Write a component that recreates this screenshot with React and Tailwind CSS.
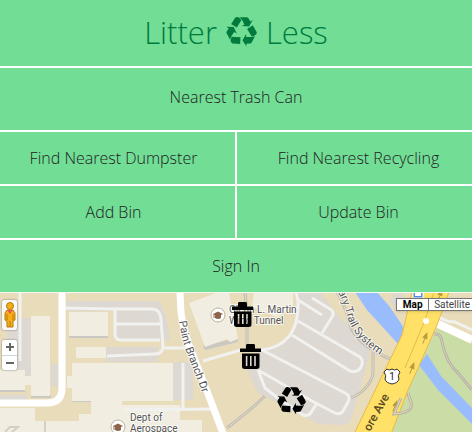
function RecycleIcon(props) {
  return (
    <svg viewBox="0 0 1792 1792" fill="currentColor" aria-hidden="true" {...props}>
      <path d="M836 1169l-15 368-2 22-420-29q-36-3-67-31.500t-47-65.500q-11-27-14.500-55t4-65 12-55 21.500-64 19-53q78 12 509 28zm-387-586l180 379-147-92q-63 72-111.500 144.500t-72.500 125-39.500 94.500-18.500 63l-4 21-190-357q-17-26-18-56t6-47l8-18q35-63 114-188l-140-86zm1231 517l-188 359q-12 29-36.500 46.500t-43.500 20.500l-18 4q-71 7-219 12l8 164-230-367 211-362 7 173q170 16 283 5t170-33zm-785-924q-47 63-265 435l-317-187-19-12 225-356q20-31 60-45t80-10q24 2 48.500 12t42 21 41.500 33 36 34.500 36 39.500 32 35zm655 307l212 363q18 37 12.500 76t-27.500 74q-13 20-33 37t-38 28-48.500 22-47 16-51.500 14-46 12q-34-72-265-436l313-195zm-143-226l142-83-220 373-419-20 151-86q-34-89-75-166t-75.500-123.500-64.500-80-47-46.500l-17-13 405 1q31-3 58 10.500t39 28.500l11 15q39 61 112 190z" />
    </svg>
  );
}

function ActionButton({ children, className = "h-[52px]" }) {
  return (
    <button
      type="button"
      className={`w-full cursor-pointer bg-[#71dd95] text-center text-[16px] font-light text-[#222] ${className}`}
    >
      {children}
    </button>
  );
}

function TrashMarker({ x, y }) {
  return (
    <g transform={`translate(${x} ${y})`} fill="#000">
      <path d="M7 1.500Q7 0 8 0H15Q16 0 16 1.500V4.500H22V8H1V4.500H7z" />
      <path
        fillRule="evenodd"
        d="M3 9.500h17.500v13q0 2.500-3 2.500H6q-3 0-3-2.500zM6.800 12v10h1.600V12zM11 12v10h1.600V12zM15.200 12v10h1.600V12z"
      />
    </g>
  );
}

function SchoolPin({ x, y }) {
  return (
    <g transform={`translate(${x} ${y})`}>
      <circle r="7" fill="#fff" stroke="#b9b3a5" strokeWidth="1" />
      <path d="M-5-1 0-3.500 5-1 3 0v3q-3 2-6 0V0z" fill="#8d6449" />
      <path d="M-4-1v4" stroke="#8d6449" />
    </g>
  );
}

function RoadArrow({ x, y }) {
  return (
    <path
      transform={`translate(${x} ${y}) rotate(22)`}
      d="M0 6V-2M-2 0 0-5 2 0z"
      fill="#b79a3e"
      stroke="#b79a3e"
      strokeWidth="1"
    />
  );
}

function CampusMap() {
  const halo = {
    stroke: "#fff",
    strokeWidth: 2,
    strokeOpacity: 0.75,
    paintOrder: "stroke",
    strokeLinejoin: "round",
  };
  return (
    <svg
      viewBox="0 292 472 140"
      preserveAspectRatio="xMidYMin slice"
      className="block h-full w-full font-['Roboto',sans-serif]"
      role="img"
      aria-label="Campus map"
    >
      <defs>
        <path id="paint-branch" d="M179 321Q182 342 189 358L206 403" />
        <path id="trail" d="M338 292Q343 302 347 315Q354 343 392 361" />
      </defs>
      <rect y="292" width="472" height="140" fill="#e8dcbb" />

      <g fill="#ddd8d1">
        <path d="M7 318H31V376H7zM51 364H58V386H51zM66 301H157Q166 305 170 340H115V311H66zM106 347H158V362H106zM173 362H193V400H173zM0 395H27V400H0z" />
        <path d="M298 292H320L342 320 364 338Q370 345 369 356L352 416Q350 426 340 425L318 424 258 393Q248 375 245 360L262 350Q286 347 294 332 301 316 298 292z" />
      </g>

      <g fill="#cbc8c4">
        <path d="M69 335H108V338H69zM31 395H51V398H31zM0 389H25V392H0zM203 346 238 338 238 342 205 350zM72 400H120V402H72z" />
      </g>
      <g fill="#f1ede0">
        <path d="M31 316H50V396H31V385H25V390H0V370H25V376H31zM69 312H108V336H69zM76 347H106V358H76zM72 363H173V401H72V388H67V376H72zM0 408H35V421H79V414H91V401H122V405H180V420H202V432H0z" />
        <path d="M189 303 216 293H229L238 339 230 342 227 339 205 347z" />
        <path d="M254 292H293V308L277 317 252 307z" />
      </g>
      <path d="M45 421V432M5 432 10 427H18L12 432" fill="none" stroke="#d4cfc5" strokeWidth="2" />

      <path d="M435 292H472V335L437 320z" fill="#e8dcbb" />
      <path d="M395 292H403L398 312 390 301z" fill="#ddd8d1" />
      <path d="M437 328 472 344V432H385L412 380z" fill="#cadda7" />
      <path d="M355 292H377L390 307 404 328 399 345 367 310z" fill="#99bdfc" />
      <path d="M427 354 441 376 472 408V424L438 390 419 365z" fill="#99bdfc" />

      <g fill="none" stroke="#f1f1f0" strokeWidth="3" strokeLinejoin="round">
        <path d="M20 292V361M62 308 115 309H151Q160 308 161 320L163 346Q163 354 155 354L107 356M115 309V334Q115 340 121 340H160M116 324H161M163 348H186M183 363V408M125 410 215 409" />
        <path d="M203 361 241 350H262Q300 345 298 301L296 292M298 300 322 315M298 321 360 357Q364 361 361 367 358 373 350 371L292 335M262 350 345 393Q351 396 348 402L343 411Q340 416 333 412L312 401 258 370M258 370 265 388 278 398 303 415Q309 417 312 411L317 403M312 298 330 309Q335 312 332 317L322 333M430 308Q440 322 455 322L472 330" />
      </g>
      <g fill="none">
        <path d="M245 292 247 314V348M265 396Q252 409 227 428M373 350V374Q369 390 351 398M336 290Q345 305 350 325 357 345 390 359" stroke="#c1bcb1" strokeWidth="3" />
        <path d="M245 292 247 314V348M265 396Q252 409 227 428M373 350V374Q369 390 351 398M336 290Q345 305 350 325 357 345 390 359" stroke="#e3dcca" strokeWidth="1" />
      </g>
      <path d="M180 292 181 313Q184 335 194 358L207 391 224 436M62 292V388Q62 403 47 403H0" fill="none" stroke="#fff" strokeWidth="7" />
      <path d="M434 322 472 340" stroke="#fff" strokeWidth="8" />

      <path d="M412 292H449L437 325 419 366 408 390 391 434H354L382 376 402 335z" fill="#ffe168" stroke="#e9b84b" strokeWidth="1" />
      <path d="M434 292 425 320 405 368" fill="none" stroke="#e4bd47" strokeWidth="1" />
      <circle cx="426" cy="321" r="3" fill="#fff" />
      <RoadArrow x={425} y={338} />
      <RoadArrow x={412} y={368} />
      <RoadArrow x={395} y={406} />
      <RoadArrow x={440} y={295} />
      <path d="M401 398 394 414Q414 413 411 402L408 393" fill="none" stroke="#bbb19a" strokeWidth="3" />
      <path d="M401 398 394 414Q414 413 411 402L408 393" fill="none" stroke="#e3dcca" strokeWidth="1" />
      <path d="M434 334Q441 333 442 342 446 363 459 374L472 390" fill="none" stroke="#b5b2a5" strokeWidth="3" />
      <path d="M434 334Q441 333 442 342 446 363 459 374L472 390" fill="none" stroke="#d8d2c1" strokeWidth="1" />
      <rect x="413" y="288" width="10" height="10" rx="1" fill="#4c8ee8" stroke="#fff" />
      <path d="M415 293H421V296H415z" fill="#fff" />

      <g fill="#555" fontSize="11">
        <text {...halo}><textPath href="#paint-branch">Paint Branch Dr</textPath></text>
        <text {...halo}><textPath href="#trail">ary Trail System</textPath></text>
        <text {...halo} x="229" y="313" fontSize="10">Glenn L. Martin</text>
        <text {...halo} x="229" y="324" fontSize="10">Wind Tunnel</text>
        <text {...halo} x="130" y="421" fontSize="10">Dept of</text>
        <text {...halo} x="130" y="432" fontSize="10">Aerospace</text>
      </g>
      <text transform="translate(370 432) rotate(-61)" fontSize="12" fontWeight="500" fill="#5a4a25">ore Ave</text>
      <SchoolPin x={218} y={315} />
      <SchoolPin x={118} y={427} />
      <path d="M387 369Q389 371 392 369 395 371 397 369L400 372Q397 376 399 379 398 383 392 384 386 383 385 379 387 376 384 372z" fill="#fff" stroke="#333" strokeWidth="1" />
      <text x="392" y="380" textAnchor="middle" fontSize="10" fill="#222">1</text>

      <TrashMarker x={231} y={302} />
      <TrashMarker x={239} y={344} />
      <RecycleIcon x={277} y={387} width={29} height={29} color="#000" />
      <path d="M0 292.500H472" stroke="#f7f7f4" />
    </svg>
  );
}

function Pegman() {
  return (
    <svg viewBox="0 0 12 26" className="h-[26px] w-3" aria-hidden="true">
      <path d="M3 8H9L11 11V18L9 19V25H3V19L1 18V11z" fill="#f5ae16" stroke="#b97a0b" strokeWidth="1" />
      <path d="M6 19V25M3 12V18M9 12V18" stroke="#b97a0b" strokeWidth="1" />
      <path d="M3 8H9L6 12z" fill="#e75a4d" />
      <circle cx="6" cy="4" r="3.500" fill="#f5ae16" stroke="#b97a0b" strokeWidth="1" />
    </svg>
  );
}

export default function App() {
  return (
    <div className="flex min-h-screen flex-col bg-white font-['Open_Sans',sans-serif]">
      <main className="flex flex-col gap-[2px]">
        <h1 className="flex h-[66px] items-center justify-center gap-[9px] bg-[#71dd95] pb-[2px] text-[31px] font-light text-[#007a3d]">
          <span>Litter</span>
          <RecycleIcon className="size-[31px]" />
          <span>Less</span>
        </h1>
        <ActionButton className="h-[62px] pb-1">Nearest Trash Can</ActionButton>
        <div className="grid grid-cols-2 gap-[2px]">
          <ActionButton className="h-[52px] pr-2">Find Nearest Dumpster</ActionButton>
          <ActionButton className="h-[52px] pl-2">Find Nearest Recycling</ActionButton>
          <ActionButton className="h-[52px] pr-2">Add Bin</ActionButton>
          <ActionButton className="h-[52px] pl-2">Update Bin</ActionButton>
        </div>
        <ActionButton>Sign In</ActionButton>
      </main>

      <section className="relative h-[140px] grow overflow-hidden font-['Roboto',sans-serif]">
        <div className="absolute inset-0">
          <CampusMap />
        </div>
        <div className="absolute top-2 left-[2px] flex flex-col gap-[10px]">
          <button type="button" aria-label="Street View" className="flex h-[30px] w-[15px] items-center justify-center rounded-xs bg-[#f8f8f8] shadow-[0_0_2px_#666]">
            <Pegman />
          </button>
          <div className="flex h-[30px] w-[15px] flex-col divide-y divide-gray-300 rounded-xs bg-white text-[#666] shadow-[0_0_2px_#666]">
            <button type="button" aria-label="Zoom in" className="flex flex-1 items-center justify-center">
              <svg viewBox="0 0 8 8" className="size-2" aria-hidden="true"><path d="M0 4H8M4 0V8" stroke="currentColor" strokeWidth="2" /></svg>
            </button>
            <button type="button" aria-label="Zoom out" className="flex flex-1 items-center justify-center">
              <svg viewBox="0 0 8 8" className="size-2" aria-hidden="true"><path d="M0 4H8" stroke="currentColor" strokeWidth="2" /></svg>
            </button>
          </div>
        </div>
        <div className="absolute top-[6px] -right-1 flex h-[13px] border border-[#777] bg-white text-[10px] leading-[11px] shadow-sm">
          <button type="button" className="w-8 border-r border-[#777] font-bold text-black">Map</button>
          <button type="button" className="pr-[5px] pl-[5px] text-[#444]">Satellite</button>
        </div>
      </section>
    </div>
  );
}
